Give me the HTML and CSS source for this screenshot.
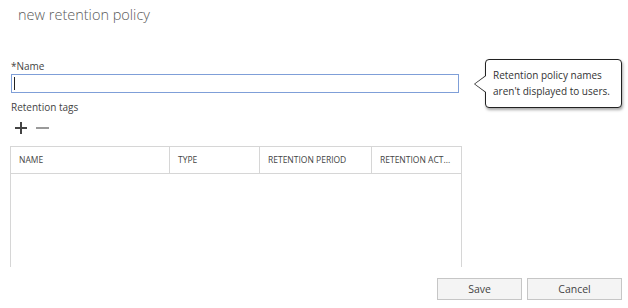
FILE: index.html
```html
<!DOCTYPE html>
<html lang="en">
<head>
    <meta charset="UTF-8">
    <title>new retention policy</title>
    <link rel="stylesheet" href="styles.css">
</head>
<body>
    <div class="dialog">
        <h1 class="title">new retention policy</h1>

        <div class="content">
            <!-- Nome da politica -->
            <div class="field">
                <div class="label">*Name</div>
                <div class="text-input"><span class="caret"></span></div>
                <div class="callout">Retention policy names<br>aren't displayed to users.</div>
            </div>

            <div class="label tags-label">Retention tags</div>
            <div class="toolbar">
                <svg class="tool-icon" width="14" height="12" viewBox="0 0 14 12">
                    <path d="M7 0v12M1 6h12" stroke="#444" stroke-width="2" fill="none"/>
                </svg>
                <svg class="tool-icon" width="13" height="12" viewBox="0 0 13 12">
                    <path d="M0 6h13" stroke="#9a9a9a" stroke-width="2" fill="none"/>
                </svg>
            </div>

            <!-- Lista de tags -->
            <div class="grid">
                <div class="grid-head">
                    <div class="cell col-name">NAME</div>
                    <div class="cell col-type">TYPE</div>
                    <div class="cell col-period">RETENTION PERIOD</div>
                    <div class="cell col-action">RETENTION ACT...</div>
                </div>
                <div class="grid-body"></div>
            </div>
        </div>

        <div class="footer">
            <button class="btn">Save</button>
            <button class="btn">Cancel</button>
        </div>
    </div>
</body>
</html>
```

FILE: styles.css
```css
/* Dialogo de nova politica */
body {
    margin: 0;
    background-color: #fff;
    font-family: "Open Sans", "Liberation Sans", sans-serif;
    color: #333;
}

.dialog {
    width: 628px;
    height: 308px;
    overflow: hidden;
}

.title {
    margin: 0;
    padding: 5px 0 0 18px;
    height: 38px;
    font-size: 14.5px;
    font-weight: 300;
    color: #5a5a5a;
}

.content {
    height: 224px;
    overflow: hidden;
    padding-left: 11px;
}

.field {
    position: relative;
    width: 448px;
    padding-top: 16px;
}

.label {
    font-size: 10px;
    line-height: 14px;
    color: #444;
}

.text-input {
    margin-top: 1px;
    height: 17px;
    border: 1px solid #7f9fd8;
    position: relative;
}

.caret {
    position: absolute;
    left: 2px;
    top: 2px;
    width: 1px;
    height: 13px;
    background-color: #222;
}

.callout {
    position: absolute;
    left: 474px;
    top: 16px;
    width: 121px;
    padding: 7px 7px 8px 7px;
    border: 1px solid #222;
    border-radius: 4px;
    background-color: #fff;
    box-shadow: 1px 2px 3px rgba(0, 0, 0, 0.35);
    font-size: 10px;
    line-height: 16px;
    color: #333;
    white-space: nowrap;
}

/* seta do balao */
.callout::before,
.callout::after {
    content: "";
    position: absolute;
    border-style: solid;
    border-color: transparent;
}

.callout::before {
    left: -12px;
    top: 15px;
    border-width: 9px 12px 9px 0;
    border-right-color: #222;
}

.callout::after {
    left: -11px;
    top: 16px;
    border-width: 8px 11px 8px 0;
    border-right-color: #fff;
}

.tags-label {
    margin-top: 7px;
}

.toolbar {
    display: flex;
    gap: 8px;
    align-items: center;
    height: 16px;
    padding: 6px 0 0 3px;
}

.grid {
    margin-top: 10px;
    margin-left: -1px;
    width: 450px;
    height: 240px;
    border: 1px solid #d6d6d6;
}

.grid-head {
    display: flex;
    height: 26px;
    border-bottom: 1px solid #d6d6d6;
}

.cell {
    font-size: 8.5px;
    line-height: 26px;
    color: #444;
    padding-left: 8px;
    border-right: 1px solid #d6d6d6;
    white-space: nowrap;
    overflow: hidden;
    box-sizing: border-box;
}

.col-name { width: 159px; }
.col-type { width: 90px; }
.col-period { width: 112px; }
.col-action { width: 89px; border-right: none; }

.footer {
    display: flex;
    justify-content: flex-end;
    gap: 5px;
    padding: 11px 6px 0 0;
}

.btn {
    height: 22px;
    width: 85px;
    background-color: #f4f4f4;
    border: 1px solid #c6c6c6;
    font-family: "Open Sans", "Liberation Sans", sans-serif;
    font-size: 10.5px;
    color: #444;
    padding: 0;
}

.btn + .btn {
    width: 95px;
}
```
